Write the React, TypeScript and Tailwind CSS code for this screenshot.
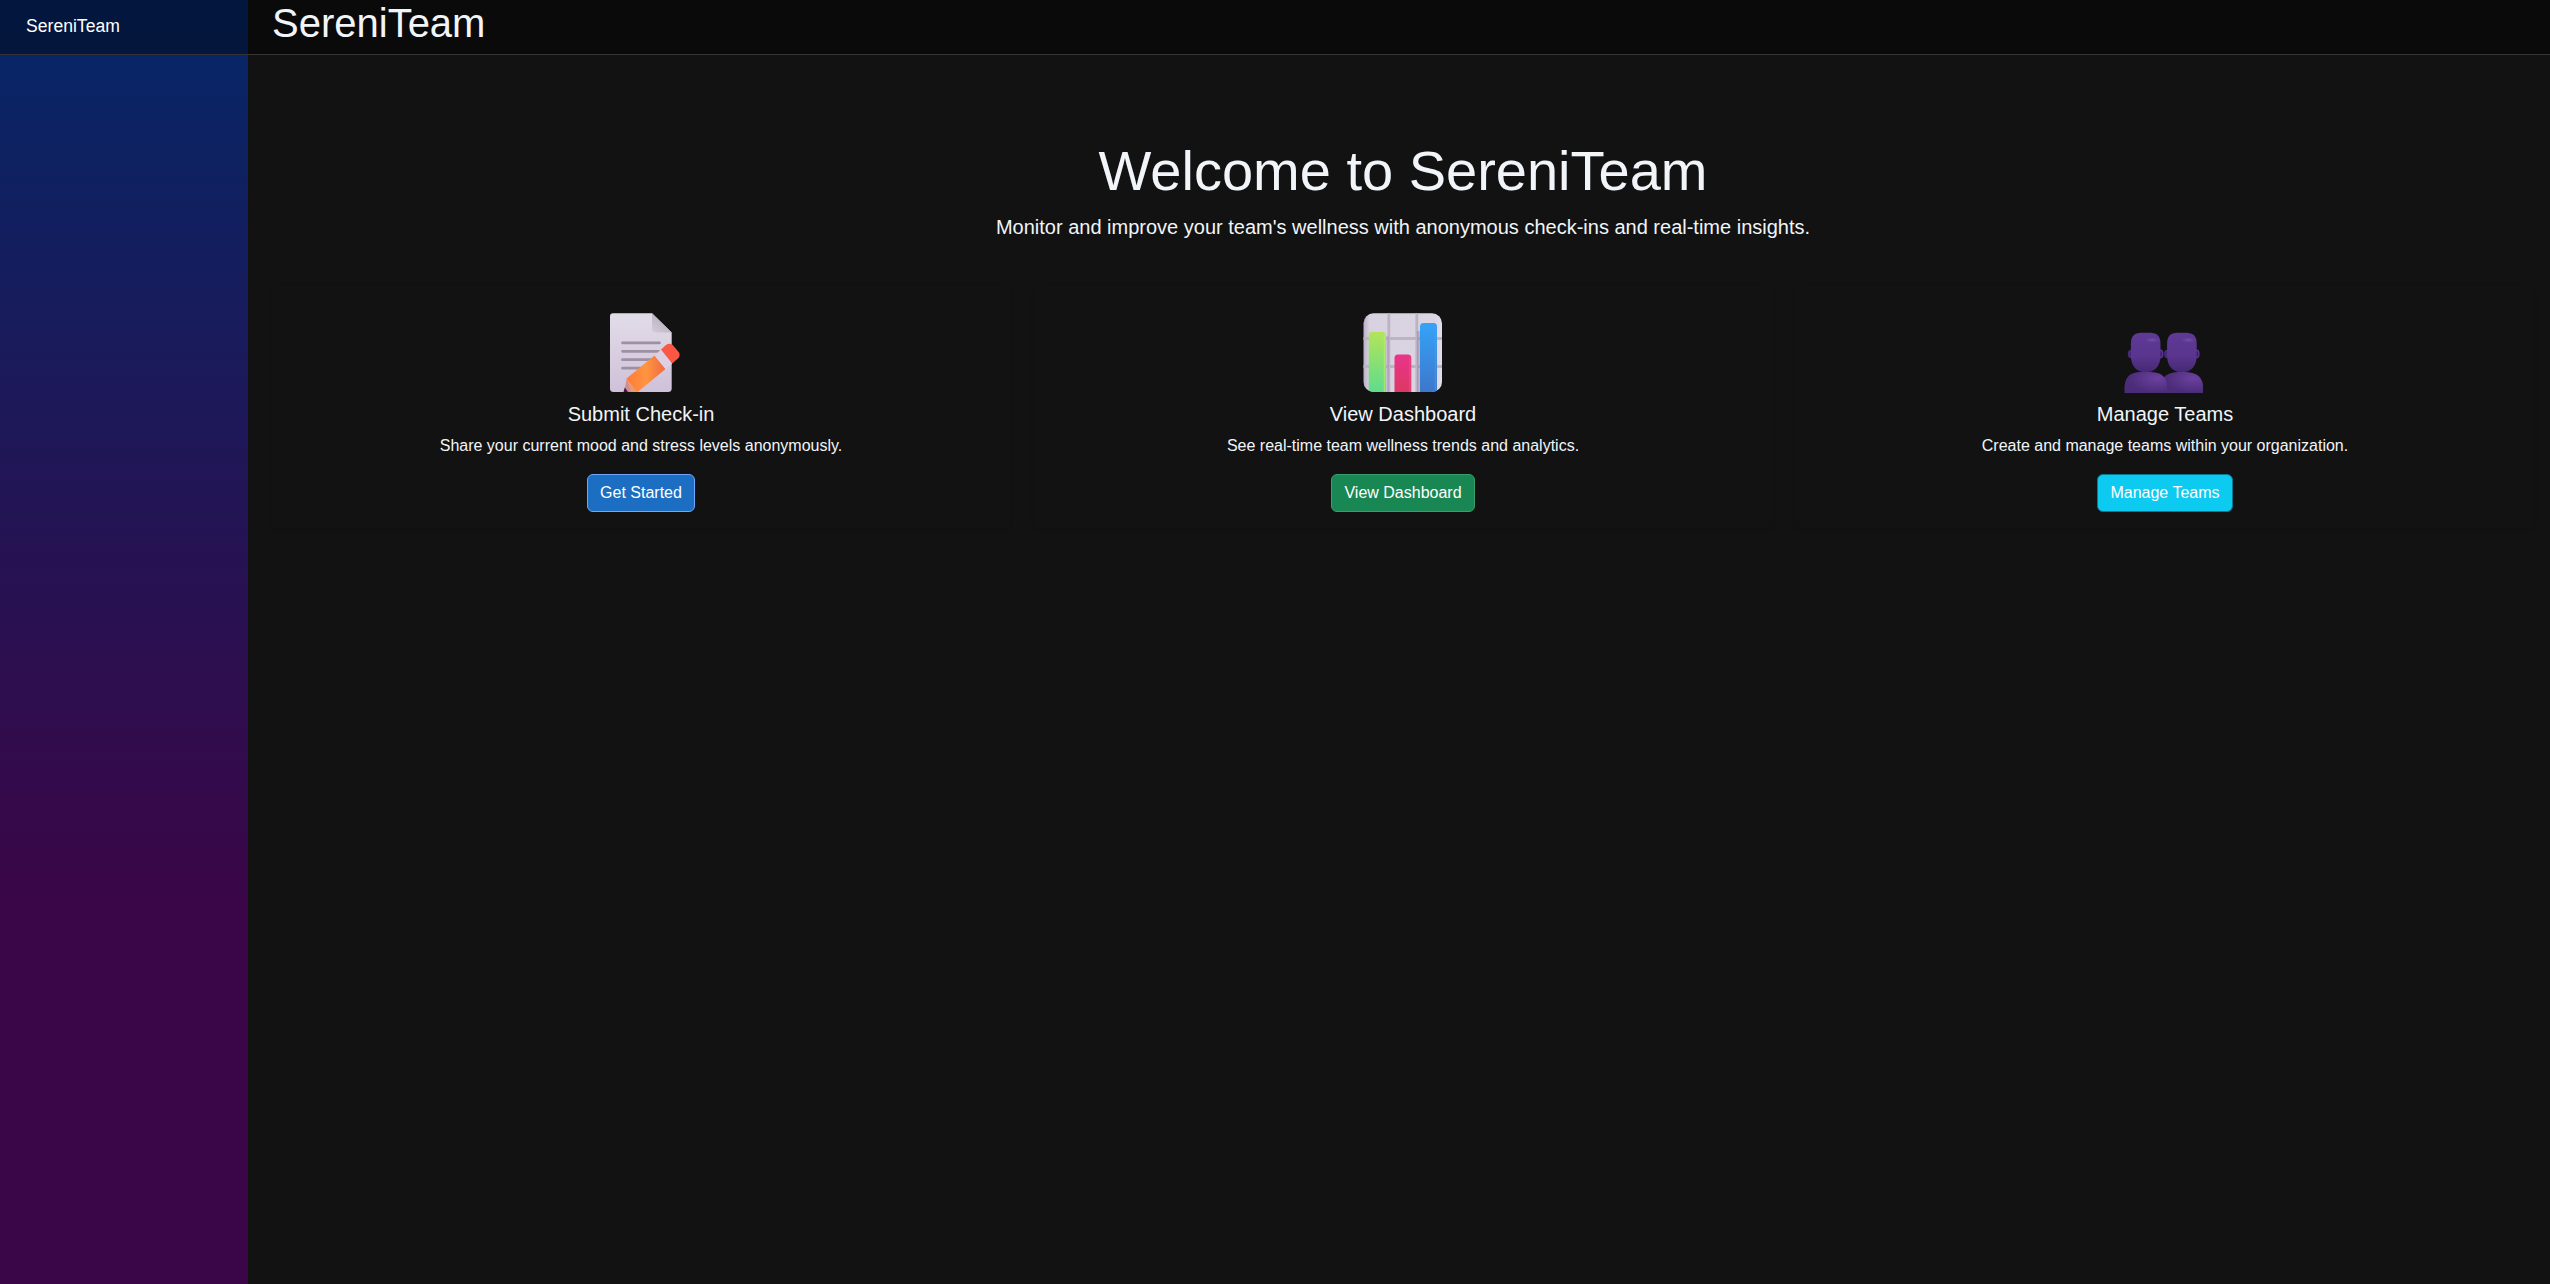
import React from "react";

function MemoIcon() {
  return (
    <svg className="mr-[2px] block" width="80" height="80" viewBox="0 0 80 80" aria-hidden="true">
      <defs>
        <linearGradient id="paper" x1="0" y1="0" x2="0" y2="1">
          <stop offset="0" stopColor="#e2dce8" />
          <stop offset="1" stopColor="#cfc1d9" />
        </linearGradient>
        <linearGradient id="fold" x1="0.7" y1="0.3" x2="0.1" y2="1">
          <stop offset="0" stopColor="#b9b0bf" />
          <stop offset="1" stopColor="#d3cad8" />
        </linearGradient>
        <linearGradient id="wood" x1="0" y1="0" x2="1" y2="0">
          <stop offset="0" stopColor="#ff7a38" />
          <stop offset="0.5" stopColor="#ff9540" />
          <stop offset="1" stopColor="#ee6a3f" />
        </linearGradient>
        <clipPath id="memoClip"><rect width="80" height="79" /></clipPath>
      </defs>
      <path d="M13 .3H52L71.700 19.500V75.500Q71.700 79 68 79H13.500Q10 79 10 75.500V3.500Q10 .3 13 .3Z" fill="url(#paper)" />
      <path d="M52 .3L71.700 19.500H55.500Q52 19.500 52 16Z" fill="url(#fold)" />
      <g stroke="#9c91a3" strokeWidth="2.700" strokeLinecap="round">
        <path d="M22.500 29.800H59.500M22.500 38.300H59M22.500 46.700H52M22.500 55.200H44" />
      </g>
      <g clipPath="url(#memoClip)">
        <path d="M26.800 65.500L37.500 78.500L36.500 79H24Z" fill="#d58d8c" />
        <path d="M26.800 65.500L41 61L37.500 79H31Z" fill="#e79a78" />
        <path d="M24.800 74.500L28 79H23.500Z" fill="#3c174f" />
        <path d="M26.500 65.500L54.500 42.500L65.500 56L37.500 79.200Z" fill="url(#wood)" />
        <path d="M54.500 42.500L61 36.500L72.200 50.500L65.500 56Z" fill="#dcd0e2" />
        <path d="M61 36.500L66 32Q69.500 29.500 72.500 31.800L79 39.500Q80.500 42.500 78.500 45L72.200 50.500Z" fill="#fa5745" />
      </g>
    </svg>
  );
}

function ChartIcon() {
  return (
    <svg className="block" width="80" height="80" viewBox="0 0 80 80" aria-hidden="true">
      <defs>
        <linearGradient id="green" x1="0" y1="0" x2="0" y2="1">
          <stop offset="0" stopColor="#b2e45a" />
          <stop offset="1" stopColor="#5fdc8d" />
        </linearGradient>
        <linearGradient id="pink" x1="0" y1="0" x2="0" y2="1">
          <stop offset="0" stopColor="#e9348b" />
          <stop offset="1" stopColor="#dc3864" />
        </linearGradient>
        <linearGradient id="blue" x1="0" y1="0" x2="0" y2="1">
          <stop offset="0" stopColor="#35a3f8" />
          <stop offset="1" stopColor="#3d77cb" />
        </linearGradient>
        <linearGradient id="shade" x1="0" y1="0" x2="1" y2="0">
          <stop offset="0" stopColor="#b8acc6" />
          <stop offset="0.080" stopColor="#d8d1df" />
          <stop offset="0.900" stopColor="#dbd4e2" />
          <stop offset="1" stopColor="#e5dfeb" />
        </linearGradient>
        <clipPath id="board"><rect x="0.500" y="0.300" width="78.500" height="78.700" rx="10" /></clipPath>
      </defs>
      <g clipPath="url(#board)">
        <rect width="80" height="80" fill="url(#shade)" />
        <path d="M25.800 0V80M53.800 0V80M0 25.500H80M0 53.500H80" stroke="#bcb3c3" strokeWidth="2.800" />
        <rect x="23.500" y="23" width="2.500" height="60" fill="#a698b8" opacity=".5" />
        <rect x="54" y="18" width="2.800" height="62" fill="#9284ad" opacity=".5" />
        <path d="M5.700 79V22.500Q5.700 19 9.200 19H19.500Q23 19 23 22.500V79Z" fill="url(#green)" />
        <path d="M31.500 79V45Q31.500 41.500 35 41.500H44.800Q48.300 41.500 48.300 45V79Z" fill="url(#pink)" />
        <path d="M57 79V13.500Q57 10 60.500 10H70.500Q74 10 74 13.500V79Z" fill="url(#blue)" />
        <path d="M21.500 21V79" stroke="#bdf06c" strokeWidth="1.500" opacity=".6" />
        <path d="M72.500 13V79" stroke="#4ba0ee" strokeWidth="1.500" opacity=".5" />
        <path d="M46.800 44V79" stroke="#ee5782" strokeWidth="1.500" opacity=".5" />
      </g>
    </svg>
  );
}

function Bust({ x }: { x: number }) {
  return (
    <g transform={`translate(${x} 0)`}>
      <ellipse cx="6.800" cy="41" rx="3.200" ry="4.200" fill="#47297a" />
      <ellipse cx="36" cy="41" rx="2.600" ry="3.800" fill="#3a2166" stroke="#65399a" strokeWidth="1.200" />
      <path d="M6.700 31C6.700 23.500 10 19.800 17 19.800H26C33 19.800 36.300 23.500 36.300 31V43C36.300 53 30.500 59.300 21.500 59.300C12.500 59.300 6.700 53 6.700 43Z" fill="url(#head)" />
      <ellipse cx="28" cy="27" rx="7" ry="2.500" fill="url(#shine)" />
    </g>
  );
}

function TeamIcon() {
  return (
    <svg className="mr-[2px] block" width="80" height="80" viewBox="0 0 80 80" aria-hidden="true">
      <defs>
        <linearGradient id="head" x1="0" y1="0" x2="0" y2="1">
          <stop offset="0" stopColor="#5f3996" />
          <stop offset="0.600" stopColor="#59358e" />
          <stop offset="1" stopColor="#452873" />
        </linearGradient>
        <radialGradient id="shine">
          <stop offset="0" stopColor="#7a54ae" stopOpacity="0.8" />
          <stop offset="1" stopColor="#7a54ae" stopOpacity="0" />
        </radialGradient>
        <radialGradient id="body" cx="0.780" cy="0.300" r="0.700">
          <stop offset="0" stopColor="#6b419f" />
          <stop offset="1" stopColor="#4b2c78" />
        </radialGradient>
      </defs>
      <Bust x={0.2} />
      <Bust x={36.4} />
      <path d="M36.500 80V73Q38 59 55 59H62Q79 60 79 74V80Z" fill="url(#body)" />
      <path d="M0.500 80V74Q1 59 17 59H26Q43 59 43 74V80Z" fill="url(#body)" />
    </svg>
  );
}

const cards = [
  {
    icon: <MemoIcon />,
    title: "Submit Check-in",
    text: "Share your current mood and stress levels anonymously.",
    action: "Get Started",
    style: "border-[#6ea8fe] bg-[#1b6ec2]",
  },
  {
    icon: <ChartIcon />,
    title: "View Dashboard",
    text: "See real-time team wellness trends and analytics.",
    action: "View Dashboard",
    style: "border-[#3a9d6c] bg-[#198754]",
  },
  {
    icon: <TeamIcon />,
    title: "Manage Teams",
    text: "Create and manage teams within your organization.",
    action: "Manage Teams",
    style: "border-[#087990] bg-[#0dcaf0]",
  },
];

export default function App() {
  return (
    <div className="flex h-[1284px] w-full overflow-hidden bg-[#121212] font-['Liberation_Sans',Arial,sans-serif] text-base text-[#f1f5f9]">
      <aside className="w-[248px] shrink-0 bg-[linear-gradient(180deg,#052767_0%,#3a0647_70%)]">
        <div className="flex h-[55px] items-center border-b border-[#333] bg-black/40 pl-[26px]">
          <a className="pb-[3px] text-[17.6px] leading-[26px] text-white">SereniTeam</a>
        </div>
      </aside>
      <main className="min-w-0 flex-1">
        <header className="h-[55px] border-b border-[#333] bg-[#0a0a0a] pl-6">
          <h1 className="text-[40px] leading-[46px]">SereniTeam</h1>
        </header>
        <section className="flex flex-col items-center pl-2 text-center">
          <h2 className="mt-[82px] text-[56px] leading-[67px]">Welcome to SereniTeam</h2>
          <p className="mt-2 text-[20px] leading-[30px]">
            Monitor and improve your team's wellness with anonymous check-ins and real-time insights.
          </p>
        </section>
        <section className="ml-6 mt-[43px] grid w-[2262px] grid-cols-3 gap-6">
          {cards.map((card) => (
            <article
              key={card.title}
              className="flex flex-col items-center rounded-md pb-4 pt-7 text-center shadow-[0_2px_4px_rgba(0,0,0,0.075)]"
            >
              {card.icon}
              <h5 className="mt-[9px] text-[20px] leading-6">{card.title}</h5>
              <p className="mt-2 leading-6">{card.text}</p>
              <button className={`mt-4 rounded-md border px-3 py-1.5 leading-6 text-white ${card.style}`}>
                {card.action}
              </button>
            </article>
          ))}
        </section>
      </main>
    </div>
  );
}
